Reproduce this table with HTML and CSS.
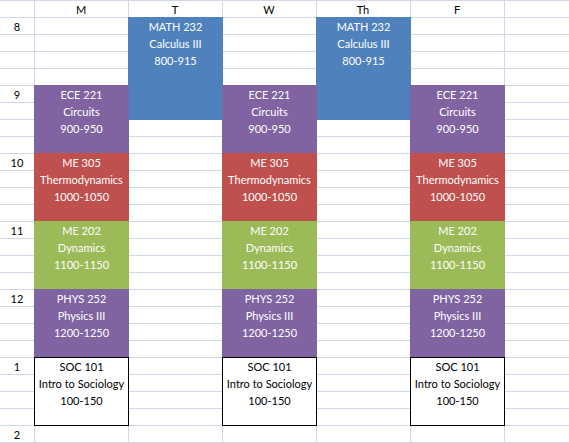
FILE: index.html
```html
<!DOCTYPE html>
<html lang="en">
<head>
<meta charset="UTF-8">
<meta name="viewport" content="width=device-width, initial-scale=1.0">
<title>Class Schedule</title>
<link rel="stylesheet" href="styles.css">
</head>
<body>
    <main class="sheet">
        <div class="head"></div>
        <div class="head">M</div>
        <div class="head">T</div>
        <div class="head">W</div>
        <div class="head">Th</div>
        <div class="head">F</div>
        <div class="head"></div>

        <div class="hour at8">8</div>
        <div class="hour at9">9</div>
        <div class="hour at10">10</div>
        <div class="hour at11">11</div>
        <div class="hour at12">12</div>
        <div class="hour at1">1</div>
        <div class="hour at2">2</div>

        <!-- tue / thu -->
        <div class="course tue at8 long blue">MATH 232<br>Calculus III<br>800-915</div>
        <div class="course thu at8 long blue">MATH 232<br>Calculus III<br>800-915</div>

        <!-- mon / wed / fri -->
        <div class="course mon at9 purple">ECE 221<br>Circuits<br>900-950</div>
        <div class="course wed at9 purple">ECE 221<br>Circuits<br>900-950</div>
        <div class="course fri at9 purple">ECE 221<br>Circuits<br>900-950</div>

        <div class="course mon at10 red">ME 305<br>Thermodynamics<br>1000-1050</div>
        <div class="course wed at10 red">ME 305<br>Thermodynamics<br>1000-1050</div>
        <div class="course fri at10 red">ME 305<br>Thermodynamics<br>1000-1050</div>

        <div class="course mon at11 green">ME 202<br>Dynamics<br>1100-1150</div>
        <div class="course wed at11 green">ME 202<br>Dynamics<br>1100-1150</div>
        <div class="course fri at11 green">ME 202<br>Dynamics<br>1100-1150</div>

        <div class="course mon at12 purple">PHYS 252<br>Physics III<br>1200-1250</div>
        <div class="course wed at12 purple">PHYS 252<br>Physics III<br>1200-1250</div>
        <div class="course fri at12 purple">PHYS 252<br>Physics III<br>1200-1250</div>

        <div class="course mon at1 plain">SOC 101<br>Intro to Sociology<br>100-150</div>
        <div class="course wed at1 plain">SOC 101<br>Intro to Sociology<br>100-150</div>
        <div class="course fri at1 plain">SOC 101<br>Intro to Sociology<br>100-150</div>
    </main>
</body>
</html>
```

FILE: styles.css
```css
:root{
    --grid:#d0d7e5;
    --blue:#4f81bd;
    --purple:#8064a2;
    --red:#c0504d;
    --green:#9bbb59;
}
body{
    margin:0;
    font-family:Lato,"Liberation Sans",sans-serif;
    font-size:11px;
    color:#000;
}
.sheet{
    display:grid;
    grid-template-columns:34px repeat(5,94px) 1fr;
    grid-template-rows:repeat(26,17px);
    height:443px;
    line-height:17px;
    background-color:#fff;
    background-image:
        linear-gradient(to bottom,var(--grid) 0 1px,transparent 1px),
        linear-gradient(to right,var(--grid) 0 1px,transparent 1px);
    background-size:100% 17px,94px 100%;
    background-position:0 0,34px 0;
    background-repeat:repeat-y,repeat-x;
}
.head{
    grid-row:1;
    text-align:center;
    padding-top:1px;
}
.hour{
    grid-column:1;
    text-align:center;
    padding-top:1px;
}
.course{
    text-align:center;
    padding-top:1px;
    margin:0 -1px -1px 0;
    color:#fff;
}

.mon{grid-column:2;}
.tue{grid-column:3;}
.wed{grid-column:4;}
.thu{grid-column:5;}
.fri{grid-column:6;}

.at8{grid-row:2 / span 4;}
.at9{grid-row:6 / span 4;}
.at10{grid-row:10 / span 4;}
.at11{grid-row:14 / span 4;}
.at12{grid-row:18 / span 4;}
.at1{grid-row:22 / span 4;}
.at2{grid-row:26 / span 1;}
.long{grid-row-end:span 6;}

.blue{background:var(--blue);}
.purple{background:var(--purple);}
.red{background:var(--red);}
.green{background:var(--green);}
.plain{
    background:#fff;
    color:#000;
    border:1px solid #000;
    padding-top:0;
}
```
